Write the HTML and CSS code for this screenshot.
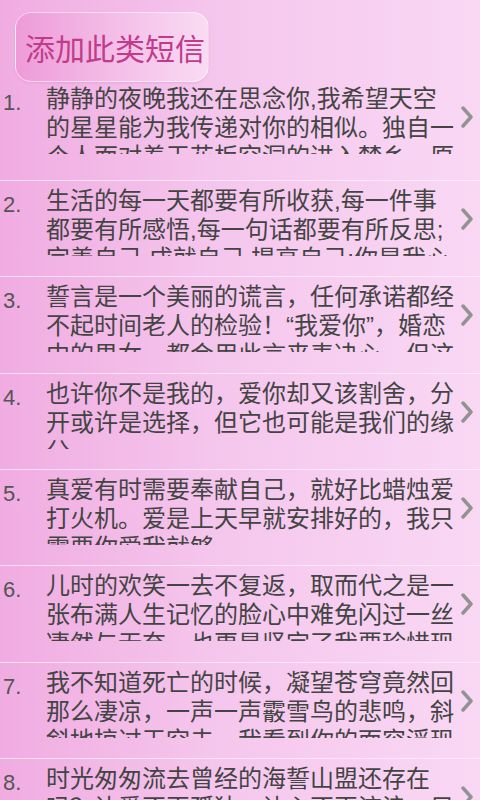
FILE: index.html
```html
<!DOCTYPE html>
<html lang="zh-CN">
<head>
    <meta charset="UTF-8">
    <meta name="viewport" content="width=device-width, initial-scale=1.0">
    <title>短信列表</title>
    <link rel="stylesheet" href="styles.css">
</head>
<body>
    <div class="page">
        <div class="header">
            <button class="add-button" type="button">添加此类短信</button>
        </div>

        <ul class="sms-list">
            <li class="sms-item">
                <span class="sms-num">1.</span>
                <p class="sms-text">静静的夜晚我还在思念你,我希望天空的星星能为我传递对你的相似。独自一个人面对着天花板空洞的进入梦乡，原来</p>
                <svg class="sms-arrow" viewBox="0 0 12 22"><path d="M2 2 L10 11 L2 20"/></svg>
            </li>
            <li class="sms-item">
                <span class="sms-num">2.</span>
                <p class="sms-text">生活的每一天都要有所收获,每一件事都要有所感悟,每一句话都要有所反思;完善自己,成就自己,提高自己;你是我心</p>
                <svg class="sms-arrow" viewBox="0 0 12 22"><path d="M2 2 L10 11 L2 20"/></svg>
            </li>
            <li class="sms-item">
                <span class="sms-num">3.</span>
                <p class="sms-text">誓言是一个美丽的谎言，任何承诺都经不起时间老人的检验！“我爱你”，婚恋中的男女，都会用此言来表决心，但这</p>
                <svg class="sms-arrow" viewBox="0 0 12 22"><path d="M2 2 L10 11 L2 20"/></svg>
            </li>
            <li class="sms-item">
                <span class="sms-num">4.</span>
                <p class="sms-text">也许你不是我的，爱你却又该割舍，分开或许是选择，但它也可能是我们的缘分</p>
                <svg class="sms-arrow" viewBox="0 0 12 22"><path d="M2 2 L10 11 L2 20"/></svg>
            </li>
            <li class="sms-item">
                <span class="sms-num">5.</span>
                <p class="sms-text">真爱有时需要奉献自己，就好比蜡烛爱打火机。爱是上天早就安排好的，我只需要你爱我就够</p>
                <svg class="sms-arrow" viewBox="0 0 12 22"><path d="M2 2 L10 11 L2 20"/></svg>
            </li>
            <li class="sms-item">
                <span class="sms-num">6.</span>
                <p class="sms-text">儿时的欢笑一去不复返，取而代之是一张布满人生记忆的脸心中难免闪过一丝凄然与无奈，也更是坚定了我要珍惜现</p>
                <svg class="sms-arrow" viewBox="0 0 12 22"><path d="M2 2 L10 11 L2 20"/></svg>
            </li>
            <li class="sms-item">
                <span class="sms-num">7.</span>
                <p class="sms-text">我不知道死亡的时候，凝望苍穹竟然回那么凄凉，一声一声霰雪鸟的悲鸣，斜斜地掠过天空去，我看到你的面容浮现在</p>
                <svg class="sms-arrow" viewBox="0 0 12 22"><path d="M2 2 L10 11 L2 20"/></svg>
            </li>
            <li class="sms-item">
                <span class="sms-num">8.</span>
                <p class="sms-text">时光匆匆流去曾经的海誓山盟还存在吗？让爱不再孤独，让心不再流浪，只有你</p>
                <svg class="sms-arrow" viewBox="0 0 12 22"><path d="M2 2 L10 11 L2 20"/></svg>
            </li>
        </ul>
    </div>
</body>
</html>
```

FILE: styles.css
```css
* {
    margin: 0;
    padding: 0;
    box-sizing: border-box;
}

html, body {
    height: 100%;
}

body {
    font-family: "Liberation Sans", "Noto Sans CJK SC", sans-serif;
    background: linear-gradient(to right, #f0ace1 0%, #f5c6ed 45%, #f9d8f4 100%);
    color: #444;
    overflow: hidden;
}

.page {
    width: 480px;
    height: 800px;
    overflow: hidden;
}

.header {
    padding: 12px 0 0 15px;
    height: 82px;
}

.add-button {
    display: block;
    width: 194px;
    height: 70px;
    padding-left: 9px;
    text-align: left;
    font-family: "Liberation Sans", "Noto Sans CJK SC", sans-serif;
    font-size: 30px;
    color: #c13b8a;
    background: linear-gradient(to right, #ee9bd8 0%, #f4c0e9 55%, #f9dbf3 100%);
    border: 1px solid rgba(255, 255, 255, 0.55);
    border-radius: 16px;
    box-shadow: 0 1px 2px rgba(200, 120, 180, 0.25);
}

.sms-list {
    list-style: none;
}

.sms-item {
    display: flex;
    align-items: flex-start;
    height: 96.33px;
    padding-top: 5px;
    border-bottom: 1px solid rgba(255, 240, 252, 0.75);
}

.sms-item:first-child {
    height: 99px;
    padding-top: 2px;
}

.sms-num {
    width: 46px;
    padding: 4px 0 0 3px;
    font-size: 22px;
    line-height: 29px;
    color: #555;
}

.sms-text {
    width: 410px;
    height: 70px;
    overflow: hidden;
    font-size: 24px;
    line-height: 29px;
    color: #444;
}

.sms-arrow {
    width: 12px;
    height: 22px;
    margin: 22px 0 0 5px;
    fill: none;
    stroke: #929292;
    stroke-width: 3.4;
    stroke-linecap: round;
    stroke-linejoin: round;
}
```
